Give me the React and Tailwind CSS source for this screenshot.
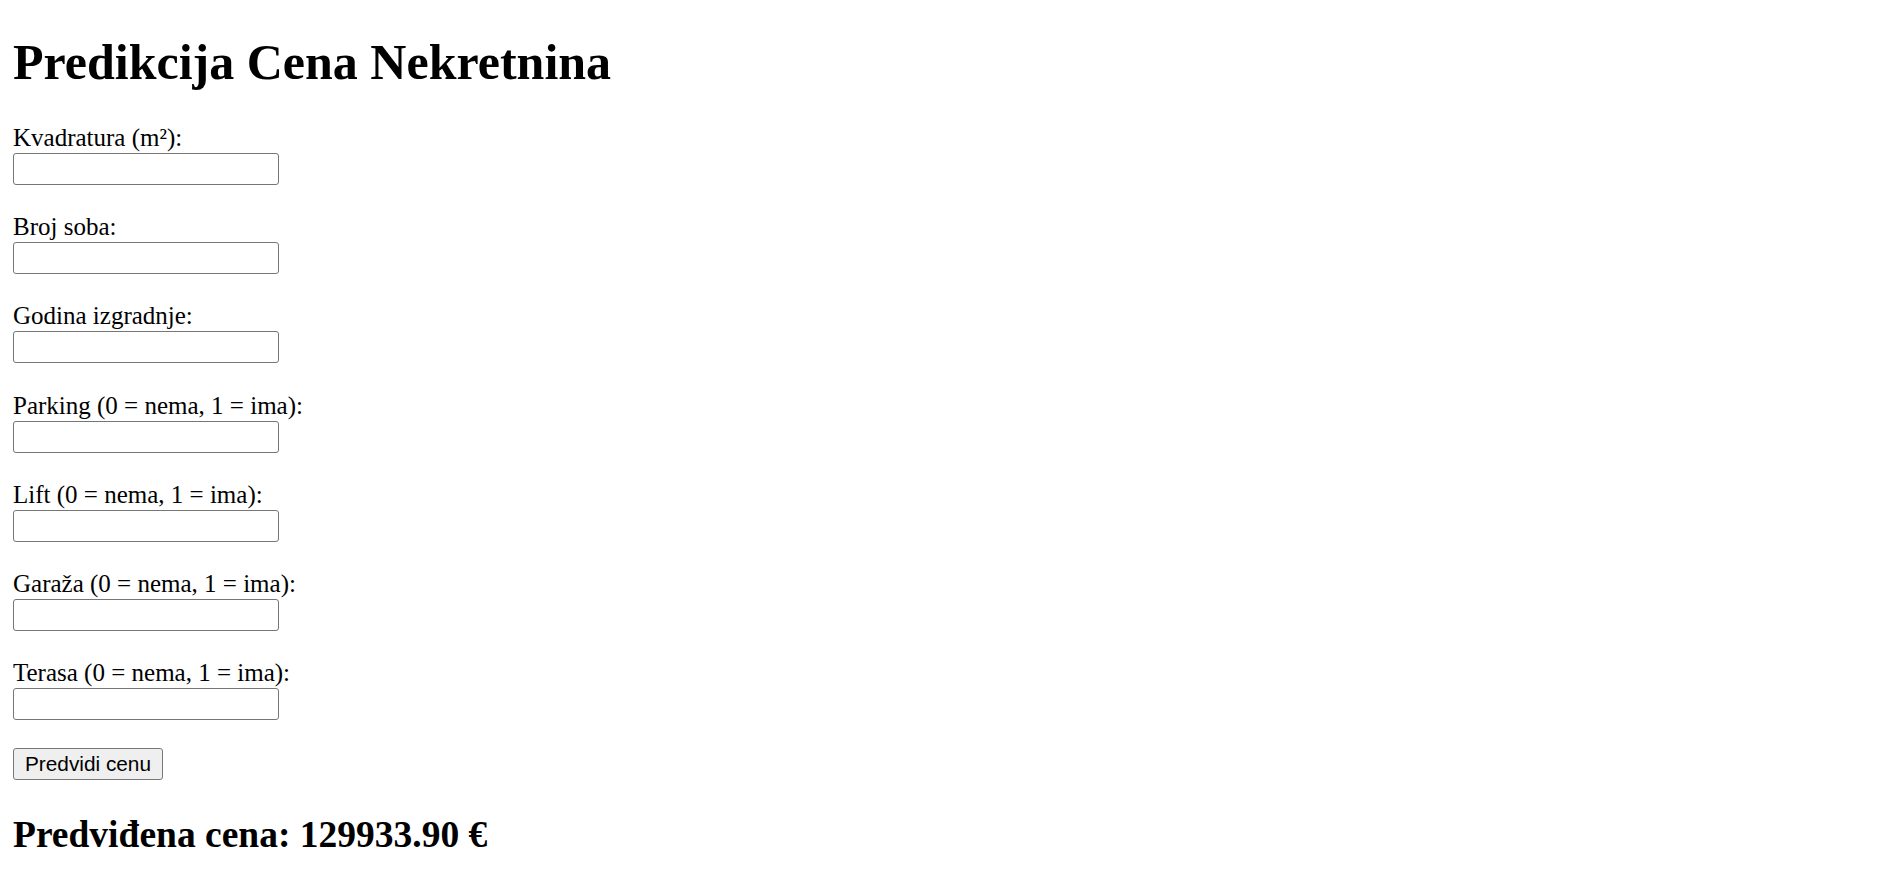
import React from "react";

const fields = [
  "Kvadratura (m²):",
  "Broj soba:",
  "Godina izgradnje:",
  "Parking (0 = nema, 1 = ima):",
  "Lift (0 = nema, 1 = ima):",
  "Garaža (0 = nema, 1 = ima):",
  "Terasa (0 = nema, 1 = ima):",
];

export default function App() {
  return (
    <div className="min-h-screen bg-white pl-[13px] pr-3 text-black font-['Liberation_Serif','Times_New_Roman',serif]">
      <h1 className="mt-[32px] mb-[32px] text-[50px] font-bold leading-[60px]">
        Predikcija Cena Nekretnina
      </h1>
      <form onSubmit={(e) => e.preventDefault()}>
        {fields.map((f) => (
          <div key={f} className="mb-[28.2px]">
            <label className="block text-[25px] leading-[28px]">{f}</label>
            <input
              type="text"
              className="mt-[1px] block h-[32px] w-[266px] rounded-[3px] border border-[#767676] bg-white px-[3px] text-[20px] outline-none"
            />
          </div>
        ))}
        <button
          type="submit"
          className="mt-[1px] block h-[32px] w-[150px] rounded-[3px] border border-[#767676] bg-[#efefef] text-center text-[20.8px] leading-[30px] text-black font-['Liberation_Sans',Arial,sans-serif]"
        >
          Predvidi cenu
        </button>
      </form>
      <h2 className="mt-[34px] text-[37.5px] font-bold leading-[41px]">
        Predviđena cena: 129933.90 €
      </h2>
    </div>
  );
}
